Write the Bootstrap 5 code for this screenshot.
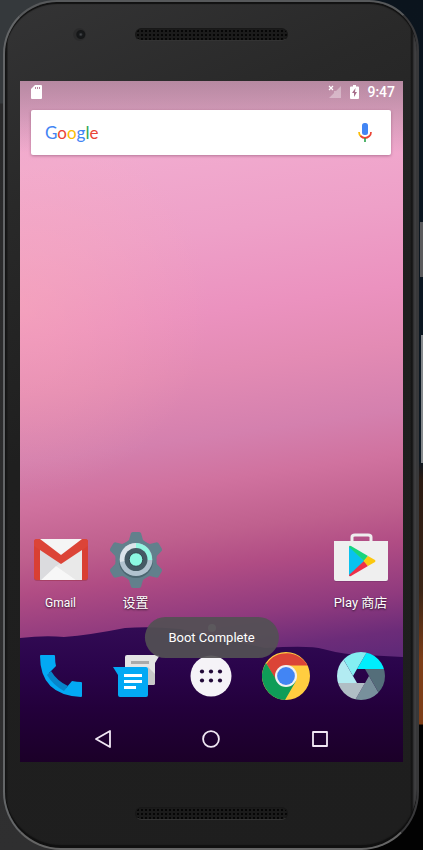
<!DOCTYPE html>
<html lang="zh-CN">
<head>
<meta charset="utf-8">
<meta name="viewport" content="width=device-width, initial-scale=1">
<title>Android</title>
<link href="https://cdn.jsdelivr.net/npm/bootstrap@5.3.0/dist/css/bootstrap.min.css" rel="stylesheet">
<style>
body{font-family:Roboto,"Noto Sans CJK SC",sans-serif;color:#fff;
  background:
   linear-gradient(#5a5a5c,#5a5a5c) right 222px/3px 55px no-repeat,
   linear-gradient(#85898c,#85898c) right 335px/2px 128px no-repeat,
   linear-gradient(#0b141d 0,#0b1722 460px,#2a1a12 480px,#3a2415 590px,#7c3d17 660px,#7c3d17 724px,#020202 725px) right top/60px 100% no-repeat,
   linear-gradient(#35393c 0,#35393c 103px,#29292a 104px,#2f2f30 100%)}
svg{display:block}
button{border:0;background:none;color:inherit;padding:0}
.device{margin:0 4px 0 3px;padding:0 14px 0 15px;border:2px solid;border-color:#57595b #38383a #656565 #646668;border-radius:54px 50px 58px 58px;
  background:linear-gradient(90deg,#171717 0,#171717 2px,transparent 3px),linear-gradient(270deg,#454547 0,#39393b 3px,#111 5px,transparent 7px),linear-gradient(155deg,#343435 0,#292929 20%,#1f1f1f 45%,#1e1e1e 100%);
  box-shadow:inset 0 2px 1px #111,inset 0 -3px 1px #101010}
.bezel-top{height:79px;padding-top:26px;display:grid;grid-template-columns:1fr 153px 1fr}
.bezel-bottom{height:86px;padding-top:45px;display:grid;grid-template-columns:1fr 153px 1fr}
.grille{grid-column:2;height:13px;border-radius:7px;border:1px solid #181818;border-bottom-color:#333;background:radial-gradient(circle,#060606 1px,transparent 1px) 0 0/4px 4px,#1b1b1b}
.lens{width:13px;height:13px;border-radius:50%;background:radial-gradient(circle at 60% 50%,#4d5054 0,#17191b 2px,#151617 4px,#2a2a2b 5px)}
.phone-screen{min-height:calc(100vh - 169px);background:#220031}
.wallpaper{position:absolute;inset:0;background:
  radial-gradient(ellipse 190px 190px at 0 33%,rgba(255,175,180,.38),transparent),
  linear-gradient(rgba(80,80,80,.36),rgba(80,80,80,0) 72px),
  linear-gradient(172deg,#f0a9d0 0,#f1abcf 12%,#eea0c8 24%,#eb92bf 35%,#e38bb4 43%,#d480ae 52%,#d0729f 58%,#bf608e 65%,#b04c84 70%,#8f3a7e 77%,#6c2c79 82%,#552777 88%)}
.hills{position:absolute;left:0;right:0;bottom:0;width:100%;height:145px}
.statusbar{height:29px;padding:4px 8px 0 11px;font-size:14px;line-height:15px}
.searchbox{height:45px;margin:0 12px 0 11px;padding:0 14px;border-radius:2px;box-shadow:0 1px 3px rgba(90,40,70,.4)}
.wordmark{font:17px/20px Lato,sans-serif}
.g-blue{color:#4285f4}.g-red{color:#ea4335}.g-yellow{color:#fbbc05}.g-green{color:#34a853}
.searchbox input{min-width:0;border:0;background:none;outline:0}
.tiles{display:grid;grid-template-columns:repeat(5,1fr);padding:0 5px 0 3px}
.tiles>*{display:flex;flex-direction:column;align-items:center;justify-content:center}
.last-tile{grid-column:5}
.app-label{font-size:12px;line-height:16px;margin:7px 0 9px;text-shadow:0 1px 2px rgba(0,0,0,.7);white-space:nowrap}
.label-zh{font-size:13px}
.pager{height:16px}
.pager i{width:8px;height:8px;border-radius:50%;background:#c8b8cc}
.dock{height:80px}
.navkeys{height:46px;display:grid;grid-template-columns:repeat(3,1fr);padding:0 29px}
.notice{position:absolute;left:50%;bottom:104px;transform:translateX(-50%);padding:10px 24px;border-radius:21px;background:rgba(83,80,84,.92);font-size:13px;line-height:21px;white-space:nowrap}
</style>
<script src="https://cdn.jsdelivr.net/npm/bootstrap@5.3.0/dist/js/bootstrap.bundle.min.js"></script>
</head>
<body>
<div class="device">
  <div class="bezel-top"><div class="d-flex justify-content-center ps-1"><span class="lens"></span></div><div class="grille"></div></div>
  <main class="phone-screen position-relative overflow-hidden d-flex flex-column">
    <div class="wallpaper"></div>
    <svg class="hills" viewBox="0 0 383 145" preserveAspectRatio="none" aria-hidden="true">
      <defs><linearGradient id="hill" x1="0" y1="0" x2="0" y2="1"><stop offset="0" stop-color="#320b54"/><stop offset=".3" stop-color="#2a044b"/><stop offset=".6" stop-color="#23003b"/><stop offset="1" stop-color="#1b0028"/></linearGradient></defs>
      <path fill="url(#hill)" d="M0 21Q25 18 44 20Q70 18 105 11Q130 9 160 12L245 31Q290 28 303 32Q325 38 345 38L383 40V145H0Z"/>
    </svg>
    <header class="statusbar position-relative d-flex align-items-start">
      <svg width="11" height="14" viewBox="0 0 11 14" aria-hidden="true"><path fill="#fff" d="M4 0H10Q11 0 11 1V13Q11 14 10 14H1Q0 14 0 13V4Z"/><path stroke="#b9859f" d="M4.5 2V4M6.5 2V4M8.500 2V4"/></svg>
      <svg width="14" height="14" viewBox="0 0 14 14" class="ms-auto" aria-hidden="true"><path fill="#fff" opacity=".35" d="M13 1V13H1L6 8V6H8Z"/><path stroke="#fff" stroke-width="1.200" d="M1 1L5 5M5 1L1 5"/></svg>
      <svg width="9" height="14" viewBox="0 0 9 14" class="ms-2" aria-hidden="true"><path fill="#fff" d="M3 0H6V1.500H8Q9 1.500 9 2.500V13Q9 14 8 14H1Q0 14 0 13V2.500Q0 1.500 1 1.500H3Z"/><path fill="#a76f8c" d="M5.500 3L2 8H4V12L7 7H5Z"/></svg>
      <time class="fw-medium ms-2">9:47</time>
    </header>
    <form class="searchbox position-relative bg-white d-flex align-items-center" role="search">
      <label for="q" class="wordmark"><span class="g-blue">G</span><span class="g-red">o</span><span class="g-yellow">o</span><span class="g-blue">g</span><span class="g-green">l</span><span class="g-red">e</span></label>
      <input id="q" class="flex-grow-1" type="text">
      <button type="button" class="px-1" aria-label="语音搜索"><svg width="16" height="20" viewBox="0 0 16 20"><rect x="5" y="0" width="6" height="12" rx="2.500" fill="#4285f4"/><g fill="none" stroke-width="1.700"><path stroke="#fbbc05" d="M2 9Q2 12 4 13.500"/><path stroke="#ea4335" d="M3.500 13Q8 17 12.500 13Q14 11.500 14 9"/><path stroke="#34a853" d="M8 15V19"/></g></svg></button>
    </form>
    <div class="flex-grow-1"></div>
    <section class="tiles position-relative">
      <button type="button"><svg width="56" height="56" viewBox="0 0 56 56" aria-hidden="true"><rect x="1" y="8" width="54" height="41" rx="3" fill="#9f3650" opacity=".6"/><rect x="1" y="7" width="54" height="41" rx="3" fill="#d93f33"/><path fill="#eee" d="M7 7H49V48H7Z"/><path fill="#e4e4e6" d="M7 17L28 32L49 17V48L23 34L8 48H7Z"/><path fill="#f7f7f7" d="M8 48L23 34L43 48Z"/><path fill="#e9e9e9" d="M23 34L28 30L49 17V48H43Z"/><path fill="#d2d2d6" opacity=".5" d="M7 17L28 31L23 34L8 48H7Z"/><path fill="#f5f5f5" d="M7 7H49L28 23Z"/><path fill="#dc4437" d="M1 10Q1 7 4 7H7L28 23L49 7H52Q55 7 55 10V14L28 32L1 14Z"/></svg><span class="app-label">Gmail</span></button>
      <button type="button"><svg width="56" height="56" viewBox="0 0 56 56" aria-hidden="true"><g fill="#62808c" transform="translate(28 28)"><circle r="20"/><path id="tooth" d="M-11-17L-7-20L-5-27Q-4-28-3-28H3Q4-28 5-27L7-20L11-17L11 17L7 20L5 27Q4 28 3 28H-3Q-4 28-5 27L-7 20L-11 17Z"/><use href="#tooth" transform="rotate(60)"/><use href="#tooth" transform="rotate(120)"/></g><circle cx="28" cy="29" r="17" fill="#4c6671"/><circle cx="28" cy="27.500" r="16.500" fill="#b1c3cf"/><path fill="#dce4ea" d="M28 11A16.500 16.500 0 0 0 12 30L28 27Z"/><path fill="#91f8e1" d="M28 11A16.500 16.500 0 0 1 44 28H28Z"/><circle cx="28" cy="27.500" r="11.500" fill="#455a64"/><circle cx="28" cy="27.500" r="6.800" fill="#8cf9e2" stroke="#34474f"/></svg><span class="app-label label-zh">设置</span></button>
      <button type="button" class="last-tile"><svg width="56" height="56" viewBox="0 0 56 56" aria-hidden="true"><path fill="#722f68" opacity=".5" d="M1 11H55V48Q55 50 53 50H3Q1 50 1 48Z"/><path fill="none" stroke="#eee" stroke-width="3" d="M19 9V5Q19 3 22 3H35Q38 3 38 5V9"/><path fill="#efefef" d="M1 9H55V47Q55 49 53 49H3Q1 49 1 47Z"/><path fill="#09c2ef" d="M17 15L31.500 29L17 44Q16 44 16 43V15Z"/><path fill="#18d57c" d="M16 15Q16 13 18 14L35 24L31 29Z"/><path fill="#ef3049" d="M31 29L35 34L18 44Q16 45 16 43Z"/><path fill="#fbc80e" d="M35 24L42 28Q43 29 42 30L35 34L30.500 29Z"/></svg><span class="app-label label-zh">Play 商店</span></button>
    </section>
    <div class="pager position-relative d-flex justify-content-center align-items-center"><i></i></div>
    <nav class="dock tiles position-relative" aria-label="Dock">
      <button type="button" aria-label="电话"><svg width="48" height="48" viewBox="0 0 48 48"><path fill="#03a9f4" d="M4 3H17Q18 3 18 4Q18 10 19 14L12 21Q18 32 29 36L35 29Q40 30 44 30Q45 30 45 31V44Q45 45 44 45Q3 43 3 4Q3 3 4 3Z"/><path fill="#0784ca" d="M14 19L10 23Q16 33 27 39L31 34Q20 29 14 19Z"/></svg></button>
      <button type="button" aria-label="信息"><svg width="48" height="48" viewBox="0 0 48 48"><path fill="#e4e4e4" d="M15 3H47Q48 4 46 6L43 11V31Q43 33 41 33H15Q13 33 13 31V5Q13 3 15 3Z"/><path fill="#c8c8c8" d="M36 15L43 22V31Q43 33 41 33H36Z"/><path fill="#aaa" d="M19 9H37V12H19Z"/><path fill="#03a9f4" d="M1 15H34Q36 15 36 17V43Q36 45 34 45H8Q6 45 6 43V23Z"/><path fill="#fff" d="M12 22H30V25H12ZM12 28H30V31H12ZM12 34H24V37H12Z"/></svg></button>
      <button type="button" aria-label="应用"><svg width="48" height="48" viewBox="0 0 48 48"><circle cx="24" cy="24" r="20.500" fill="#f5f3f7"/><g fill="#220a38"><circle cx="15" cy="19.500" r="2.100"/><circle cx="24" cy="19.500" r="2.100"/><circle cx="33" cy="19.500" r="2.100"/><circle cx="15" cy="28.500" r="2.100"/><circle cx="24" cy="28.500" r="2.100"/><circle cx="33" cy="28.500" r="2.100"/></g></svg></button>
      <button type="button" aria-label="Chrome"><svg width="48" height="48" viewBox="0 0 48 48"><circle cx="24" cy="24" r="24" fill="#ffcd40"/><path fill="#db4437" d="M4.500 12A24 24 0 0 1 45.500 13.500H24L14.500 29Z"/><path fill="#0f9d58" d="M4 11A24 24 0 0 0 23 48L34 29L24 34L15 29Z"/><circle cx="24" cy="24" r="11" fill="#f1f1f1"/><circle cx="24" cy="24" r="8.900" fill="#4285f4"/></svg></button>
      <button type="button" aria-label="相机"><svg width="48" height="48" viewBox="-24 -24 48 48"><defs><clipPath id="disc"><circle r="24"/></clipPath></defs><g clip-path="url(#disc)"><path fill="#00eefd" d="M-4-7L7-26H26V-7Z"/><path fill="#546e7a" d="M4-7H26V20L19 19L8 0Z"/><path fill="#78909c" d="M8 0L20 21V26H-7L4 7Z"/><path fill="#b0bec5" d="M4 7L-7 26H-26V7Z"/><path fill="#b2ebf2" d="M-4 7H-26V-20L-19-19L-8 0Z"/><path fill="#84eef2" d="M-8 0L-20-21V-26H7L-4-7Z"/></g></svg></button>
    </nav>
    <nav class="navkeys position-relative" aria-label="导航">
      <button type="button" class="d-flex justify-content-center align-items-center" aria-label="返回"><svg width="18" height="18" viewBox="0 0 18 18"><path fill="none" stroke="#f1e7f4" stroke-width="1.800" stroke-linejoin="round" d="M2 9L16 1V17Z"/></svg></button>
      <button type="button" class="d-flex justify-content-center align-items-center" aria-label="主屏幕"><svg width="18" height="18" viewBox="0 0 18 18"><circle cx="9" cy="9" r="7.900" fill="none" stroke="#f1e7f4" stroke-width="1.800"/></svg></button>
      <button type="button" class="d-flex justify-content-center align-items-center" aria-label="最近任务"><svg width="18" height="18" viewBox="0 0 18 18"><path fill="none" stroke="#f1e7f4" stroke-width="1.800" stroke-linejoin="round" d="M2 2H16V16H2Z"/></svg></button>
    </nav>
    <div class="notice" role="status">Boot Complete</div>
  </main>
  <div class="bezel-bottom"><div class="grille"></div></div>
</div>
</body>
</html>
